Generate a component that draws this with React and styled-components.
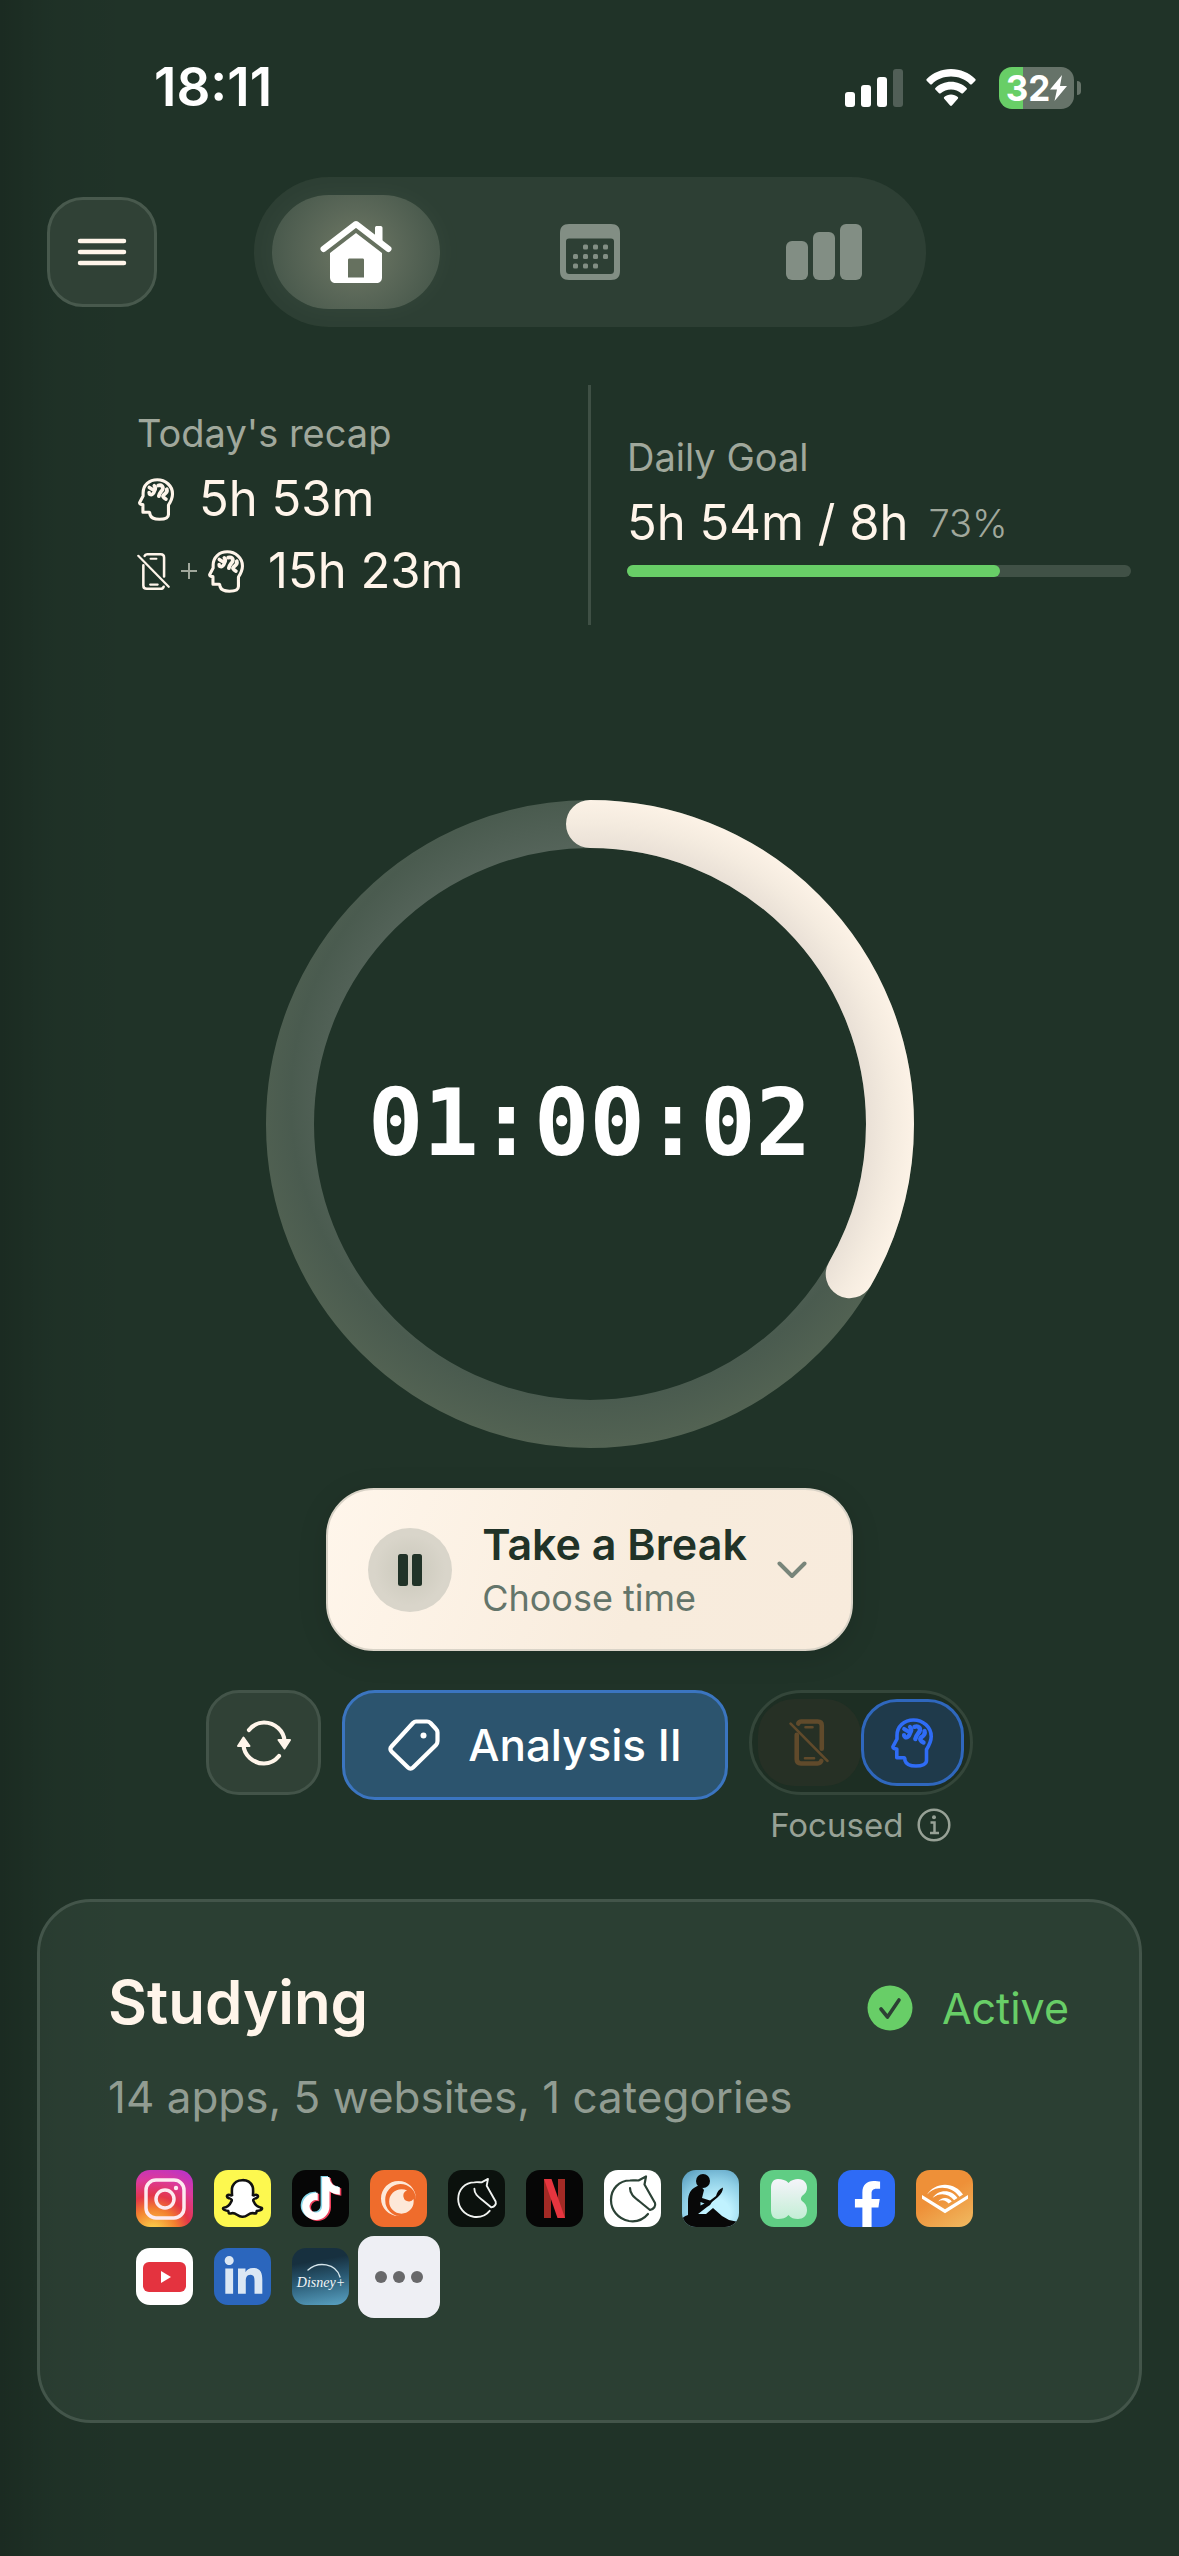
import React, { useState } from 'react'
import styled, { createGlobalStyle } from 'styled-components'
import { FaAudible, FaFacebookF, FaLinkedinIn, FaSnapchatGhost, FaTiktok } from 'react-icons/fa'
import { SiCrunchyroll } from 'react-icons/si'

const cream = '#fff5ea'
const muted = '#a0a89c'
const green = '#68ce67'

const GlobalStyle = createGlobalStyle`
* {
  box-sizing: border-box;
  margin: 0;
  padding: 0;
}
body {
  background-color: #203328;
  color: ${cream};
  font-family: Inter, "Liberation Sans", sans-serif;
}
button {
  font-family: inherit;
  color: inherit;
  background: none;
  border: none;
  cursor: pointer;
}
svg {
  display: block;
  flex-shrink: 0;
}
`

const Page = styled.div`
  min-height: 100vh;
  display: flex;
  flex-direction: column;
  background: linear-gradient(to right, rgba(0, 0, 0, 0.16), rgba(0, 0, 0, 0.05) 50px, transparent 130px);
`

/* ---------- status bar ---------- */

const StatusBar = styled.div`
  display: flex;
  justify-content: space-between;
  align-items: center;
  padding: 56px 98px 58px 154px;
  color: #fff;
`
const Clock = styled.time`
  font-size: 53px;
  line-height: 63px;
  font-weight: 600;
`
const StatusIcons = styled.div`
  display: flex;
  align-items: center;
  gap: 23px;
`
const Battery = styled.div`
  position: relative;
  display: flex;
  align-items: center;
  justify-content: center;
  width: 75px;
  height: 42px;
  margin-right: 7px;
  border-radius: 13px;
  background: linear-gradient(to right, ${green} 32%, #667369 32%);
  font-size: 35px;
  line-height: 42px;
  font-weight: 700;

  &::after {
    content: "";
    position: absolute;
    left: 78px;
    top: 14px;
    width: 4px;
    height: 14px;
    border-radius: 0 4px 4px 0;
    background: #667369;
  }
`

/* ---------- header ---------- */

const Header = styled.header`
  display: grid;
  grid-template-columns: 1fr auto 1fr;
  align-items: center;
  padding: 0 47px;
`
const MenuButton = styled.button`
  display: flex;
  align-items: center;
  justify-content: center;
  width: 110px;
  height: 110px;
  border: 3px solid #48594d;
  border-radius: 36px;
  background-color: #304136;
`
const Nav = styled.nav`
  display: flex;
  gap: 66px;
  padding: 18px;
  border-radius: 75px;
  background-color: #2d3f34;
`
const NavButton = styled.button`
  display: flex;
  align-items: center;
  justify-content: center;
  width: 168px;
  height: 114px;
  border-radius: 57px;
  color: ${({ $active }) => ($active ? '#fff' : '#828e84')};
  background: ${({ $active }) =>
    $active ? 'radial-gradient(circle, #66715f 20%, #5a6758 45%, #4a5a4d 80%)' : 'none'};
  box-shadow: ${({ $active }) => ($active ? '0 0 30px rgba(255, 245, 234, 0.04)' : 'none')};
`

/* ---------- recap ---------- */

const Recap = styled.section`
  display: grid;
  grid-template-columns: 1fr 3px 1fr;
  height: 240px;
  margin-top: 58px;
`
const RecapColumn = styled.div`
  display: flex;
  flex-direction: column;
  justify-content: center;
  gap: 12px;
  padding: ${({ $goal }) => ($goal ? '0 48px 0 36px' : '0 36px 0 137px')};
`
const Divider = styled.div`
  background-color: #3f5045;
`
const Label = styled.h2`
  font-size: 38px;
  line-height: 48px;
  font-weight: 400;
  color: ${muted};
`
const RecapRow = styled.div`
  display: flex;
  align-items: center;
  gap: ${({ $wide }) => ($wide ? '24px' : '12px')};
  font-size: 49px;
  line-height: 60px;
`
const Icons = styled.span`
  display: flex;
  align-items: center;
  gap: 11px;
`
const Percent = styled.span`
  margin-left: 8px;
  font-size: 38px;
  font-weight: 300;
  color: ${muted};
`
const Track = styled.div`
  height: 12px;
  border-radius: 6px;
  background-color: #405146;
`
const Fill = styled.div`
  height: 12px;
  border-radius: 6px;
  background-color: ${green};
`

/* ---------- timer ---------- */

const Timer = styled.section`
  display: grid;
  place-items: center;
  margin-top: 175px;

  > * {
    grid-area: 1 / 1;
  }
`
const TimeLeft = styled.div`
  font-family: "DejaVu Sans Mono", "Liberation Mono", monospace;
  font-size: 92px;
  line-height: 108px;
  font-weight: 700;
  color: #fff;
`
const BreakButton = styled.button`
  display: flex;
  align-items: center;
  align-self: center;
  gap: 30px;
  height: 163px;
  margin-top: 40px;
  padding: 0 44px 0 40px;
  border: 2px solid #d9d3c7;
  border-radius: 48px;
  background: linear-gradient(110deg, #fff6eb, #f8ecdd 60%, #f8ebdc);
  box-shadow: 0 6px 30px rgba(0, 0, 0, 0.12);
  color: #213328;
  text-align: left;
`
const PauseCircle = styled.span`
  display: flex;
  align-items: center;
  justify-content: center;
  width: 84px;
  height: 84px;
  border-radius: 50%;
  background: radial-gradient(circle, #cac8bb, #d9d5ca 60%);
`
const BreakText = styled.span`
  display: flex;
  flex-direction: column;
  gap: 4px;
  font-size: 43px;
  line-height: 52px;
  font-weight: 600;
`
const BreakHint = styled.span`
  font-size: 36px;
  line-height: 48px;
  font-weight: 400;
  color: #64756a;
`

/* ---------- session controls ---------- */

const Controls = styled.section`
  display: flex;
  justify-content: center;
  align-items: flex-start;
  gap: 21px;
  margin-top: 39px;
`
const RefreshButton = styled.button`
  display: flex;
  align-items: center;
  justify-content: center;
  width: 115px;
  height: 105px;
  border: 3px solid #435449;
  border-radius: 33px;
  background-color: #304136;
`
const SubjectButton = styled.button`
  display: flex;
  align-items: center;
  gap: 28px;
  height: 110px;
  padding: 0 43px;
  border: 3px solid #3b75c0;
  border-radius: 33px;
  background-color: #2c546e;
  color: #fff;
  font-size: 44px;
  font-weight: 500;
`
const ModeColumn = styled.div`
  display: flex;
  flex-direction: column;
  align-items: center;
  gap: 10px;
`
const ModeSwitch = styled.div`
  display: flex;
  width: 224px;
  height: 105px;
  padding: 6px;
  border: 3px solid #34463a;
  border-radius: 53px;
  background-color: #1d2e23;
`
const ModeOption = styled.label`
  position: relative;
  flex: 1;
  display: flex;
  align-items: center;
  justify-content: center;
  border-radius: 36px;
  border: 3px solid ${({ $active }) => ($active ? '#2f67bd' : 'transparent')};
  background-color: ${({ $active }) => ($active ? '#1f3a4b' : '#263025')};
  color: ${({ $active }) => ($active ? '#2f6cf6' : '#604a2b')};
  cursor: pointer;

  input {
    position: absolute;
    opacity: 0;
  }
`
const ModeName = styled.div`
  display: flex;
  align-items: center;
  gap: 14px;
  font-size: 33px;
  line-height: 40px;
  color: #97a196;
`

/* ---------- blocked apps card ---------- */

const Card = styled.section`
  margin: 54px 37px 0;
  padding: 64px 70px 115px 68px;
  border: 3px solid #43554a;
  border-radius: 54px;
  background-color: rgba(140, 168, 150, 0.11);
`
const CardHead = styled.div`
  display: flex;
  align-items: center;
  justify-content: space-between;
`
const Title = styled.h1`
  font-size: 60px;
  line-height: 72px;
  font-weight: 600;
`
const Active = styled.div`
  display: flex;
  align-items: center;
  gap: 29px;
  padding-top: 12px;
  font-size: 43px;
  line-height: 54px;
  color: ${green};
`
const Summary = styled.p`
  margin-top: 32px;
  font-size: 44px;
  line-height: 54px;
  color: #919c92;
`
const AppGrid = styled.ul`
  display: grid;
  grid-template-columns: repeat(11, 57px);
  grid-auto-rows: 57px;
  gap: 21px;
  margin: 46px 0 0 28px;
  list-style: none;
`
const AppTile = styled.li`
  width: 57px;
  height: 57px;
  border-radius: 14px;
  overflow: hidden;
  background: ${({ $bg }) => $bg};
`
const MoreItem = styled.li`
  place-self: center;
`
const MoreButton = styled.button`
  display: flex;
  align-items: center;
  justify-content: center;
  gap: 6px;
  width: 82px;
  height: 82px;
  border-radius: 16px;
  background-color: #eeeff4;

  span {
    width: 12px;
    height: 12px;
    border-radius: 50%;
    background-color: #68686a;
  }
`

/* ---------- icons ---------- */

const HeadIcon = ({ width = 36, height = 43 }) => (
  <svg width={width} height={height} viewBox="0 0 42 50" fill="none" stroke="currentColor" strokeLinecap="round" strokeLinejoin="round">
    <path strokeWidth="3.6" d="M22.5 2C13 2 6 8.5 6 17.5V21L2 28.5C1.6 30 3 31 5.8 31V39.8H13C14 39.8 14 41 14 42.5C15 46 19 48 25 48C31 48 35.5 46 35.5 42.5V31.5C38 27.5 40.2 24 40.2 18.5C40.2 9 32 2 22.5 2Z" />
    {/* brain, three folds */}
    <path strokeWidth="4.2" d="M13.2 11L16.5 13M19 9C20.500 10.500 20.500 13 19 15.500C18 18.500 16 20 14 19C13 18.500 13 17.500 13 17" />
    <path strokeWidth="4.4" d="M23.500 8.800C27.500 7.500 30 10 28.500 13.500C27 16 25 17 24.300 21" />
    <path strokeWidth="4.4" d="M33.500 13C34.500 16 32.500 18 30 19.500C28.500 21 29.500 23 32.500 24.500" />
  </svg>
)

const PhoneOffIcon = ({ width = 33, height = 39, weight = 3 }) => (
  <svg width={width} height={height} viewBox="0 0 39 46" fill="none" stroke="currentColor" strokeLinecap="round">
    <path strokeWidth={weight} d="M9 4.500C9.500 3 10.500 2.500 12 2.500H28C31 2.500 32 4 32 6.500V29" />
    <path strokeWidth={weight} d="M7.500 15.500V39.500C7.500 42 9 43.500 11.500 43.500H28C30 43.500 31 42.500 31.500 41" />
    <path strokeWidth="2.400" d="M16 8H23M15.500 38.500H24.500" />
    <path strokeWidth="2.600" d="M1.500 4.500L37.500 41" />
  </svg>
)

const HorseIcon = ({ color, viewBox = '0 0 57 57' }) => (
  <svg width="57" height="57" viewBox={viewBox} fill="none" stroke={color} strokeWidth="2.200" strokeLinecap="round" strokeLinejoin="round">
    <path d="M44 44C39 50 32 52 25 51C14 49 7 40 7 30C7 19 15 10.500 26 10.500C29 10 32 10.500 34.500 10.500L42 6.500L40.500 14.500L51 33C52 36 50 39 46 40L35 31C30 27 26 24 26 18" />
  </svg>
)

const apps = [
  {
    name: 'Instagram',
    bg: 'radial-gradient(circle at 30% 110%, #fbd14b 5%, #f3802f 32%, #e43649 50%, #dc3a9b 72%, #a92fe0 105%)',
    logo: (
      <svg width="57" height="57" viewBox="0 0 57 57" fill="none" stroke="#fdeaf0" strokeWidth="3.500">
        <rect x="10" y="10" width="38" height="38" rx="10" />
        <circle cx="29" cy="29" r="9" />
        <circle cx="40" cy="18" r="2.200" fill="#fdeaf0" stroke="none" />
      </svg>
    ),
  },
  {
    name: 'Snapchat',
    bg: '#fdf84f',
    logo: (
      <svg width="57" height="57" viewBox="0 0 57 57">
        <FaSnapchatGhost x="9" y="9" size={39} color="#fff" stroke="#111" strokeWidth="34" overflow="visible" />
      </svg>
    ),
  },
  {
    name: 'TikTok',
    bg: '#060606',
    logo: (
      <svg width="57" height="57" viewBox="0 0 57 57">
        <FaTiktok x="6" y="6" size={43} color="#86d7ea" />
        <FaTiktok x="9" y="8" size={43} color="#ee3f5b" />
        <FaTiktok x="7.500" y="7" size={43} color="#fff" />
      </svg>
    ),
  },
  {
    name: 'Crunchyroll',
    bg: '#ef6c2c',
    logo: (
      <svg width="57" height="57" viewBox="0 0 57 57">
        <SiCrunchyroll x="11" y="11" size={35} color="#fde8d8" />
      </svg>
    ),
  },
  { name: 'Lichess', bg: '#0b110d', logo: <HorseIcon color="#f1f3f1" viewBox="-5 -4 67 67" /> },
  {
    name: 'Netflix',
    bg: '#060606',
    logo: (
      <svg width="57" height="57" viewBox="0 0 57 57">
        <path fill="#a32a25" d="M18 9H25V48H18ZM32 9H39V48H32Z" />
        <path fill="#e6353f" d="M18 9H25.500L39 48H31.500Z" />
      </svg>
    ),
  },
  { name: 'Lichess Beta', bg: '#fff', logo: <HorseIcon color="#2b4236" /> },
  {
    name: 'Kindle',
    bg: 'radial-gradient(circle at 60% 75%, #c0f2ff 25%, #8fcfe6 60%, #4f94b8)',
    logo: (
      <svg width="57" height="57" viewBox="0 0 57 57" fill="#080808">
        <circle cx="21" cy="11" r="7" />
        <path d="M18 15C9 18 6 23 6 32V45C2 46 0 48 0 50V57H57V52C53 51 50 51 47 50L40 46L31 38L24 44H16L25 37L28 35L30 32L36 27C39 24 41 21 41 17.500C37 19 35 22 34 26L28 30.500L20 28L22 20Z" />
        <path fill="#a6e2f2" d="M18.500 32L22.500 33.500L18.500 35.500Z" />
      </svg>
    ),
  },
  {
    name: 'Kick',
    bg: '#60cd84',
    logo: (
      <svg width="57" height="57" viewBox="0 0 57 57">
        <defs>
          <linearGradient id="kick" x2="0" y2="1">
            <stop offset="0" stopColor="#f5f4fa" />
            <stop offset="1" stopColor="#c3eed5" />
          </linearGradient>
        </defs>
        <path
          fill="url(#kick)"
          d="M18 9C22 9 26 10 28.500 13C31 10 35 9 38 9C44 9 47 13 47 18C47 21 45 24 42 26C40.500 28 40.500 30 42 31C45 33 47 36 47 40C47 46 43 49 38 49C34 49 31 48 28.500 45C26 48 22 49 18 49C13 49 11 45 11 40V18C11 13 13 9 18 9Z"
        />
      </svg>
    ),
  },
  {
    name: 'Facebook',
    bg: '#2e6bf6',
    logo: (
      <svg width="57" height="57" viewBox="0 0 57 57">
        <FaFacebookF x="6" y="11" size={47} color="#fff" />
      </svg>
    ),
  },
  {
    name: 'Audible',
    bg: 'linear-gradient(150deg, #ee9038 45%, #f0bb62)',
    logo: (
      <svg width="57" height="57" viewBox="0 0 57 57">
        <FaAudible x="6" y="6" size={46} color="#fff" />
      </svg>
    ),
  },
  {
    name: 'YouTube',
    bg: '#fff',
    logo: (
      <svg width="57" height="57" viewBox="0 0 57 57">
        <rect x="7" y="14" width="43" height="30" rx="6" fill="#e4333f" />
        <path fill="#fff" d="M25 23L35 29L25 35Z" />
      </svg>
    ),
  },
  {
    name: 'LinkedIn',
    bg: '#2b66bd',
    logo: (
      <svg width="57" height="57" viewBox="0 0 57 57">
        <FaLinkedinIn x="8" y="8" size={43} color="#dbe7f4" />
      </svg>
    ),
  },
  {
    name: 'Disney+',
    bg: 'linear-gradient(170deg, #17303f 25%, #2a5a74 55%, #5aa3c4)',
    logo: (
      <svg width="57" height="57" viewBox="0 0 57 57">
        <path d="M16 22C26 13 44 15 48 29" fill="none" stroke="#d4e4ea" strokeWidth="1.400" strokeLinecap="round" />
        <text x="29" y="39" textAnchor="middle" fill="#f2f6f8" fontFamily="Liberation Serif, serif" fontStyle="italic" fontSize="14">
          Disney+
        </text>
      </svg>
    ),
  },
]

const HomeIcon = () => (
  <svg width="72" height="64" viewBox="0 0 72 64">
    <path d="M3.500 29L36 4L68.500 29" fill="none" stroke="currentColor" strokeWidth="6" strokeLinecap="round" strokeLinejoin="round" />
    <path fill="currentColor" d="M55 7.500C55 6.500 56 6 57 6H60C61.500 6 62.500 6.500 62.500 8V22L55 16Z" />
    <path fill="currentColor" fillRule="evenodd" d="M36 13L62 33V57C62 61 60 63 56 63H16C12 63 10 61 10 57V33ZM28 40V57.500H44V40C44 39 43.500 38.500 42.500 38.500H29.500C28.500 38.500 28 39 28 40Z" />
  </svg>
)

const dots = [
  [1, 0], [2, 0], [3, 0],
  [0, 1], [1, 1], [2, 1], [3, 1],
  [0, 2], [1, 2], [2, 2],
]

const CalendarIcon = () => (
  <svg width="60" height="56" viewBox="0 0 60 56" fill="currentColor">
    <path fillRule="evenodd" d="M9 0H51C57 0 60 3 60 9V47C60 53 57 56 51 56H9C3 56 0 53 0 47V9C0 3 3 0 9 0ZM9 14.500C7 14.500 6 15.500 6 17.500V46C6 49 7 50 10 50H50C53 50 54 49 54 46V17.500C54 15.500 53 14.500 51 14.500Z" />
    {dots.map(([x, y]) => (
      <rect key={`${x}-${y}`} x={13 + x * 10} y={20.5 + y * 9.5} width="5" height="5" rx="1.500" />
    ))}
  </svg>
)

const StatsIcon = () => (
  <svg width="76" height="56" viewBox="0 0 76 56" fill="currentColor">
    <rect x="0" y="17" width="22" height="39" rx="6" />
    <rect x="27" y="8" width="22" height="48" rx="6" />
    <rect x="54" y="0" width="22" height="56" rx="6" />
  </svg>
)

const tabs = [
  { id: 'home', label: 'Home', icon: <HomeIcon /> },
  { id: 'calendar', label: 'Calendar', icon: <CalendarIcon /> },
  { id: 'stats', label: 'Statistics', icon: <StatsIcon /> },
]

// radius of the ring's centre line
const R = 300
const LENGTH = 2 * Math.PI * R

const Ring = ({ value }) => (
  <svg width="648" height="648" viewBox="0 0 648 648" fill="none" strokeWidth="48">
    <defs>
      <radialGradient id="track" gradientUnits="userSpaceOnUse" cx="324" cy="300" r="348">
        <stop offset="0.720" stopColor="#55645a" />
        <stop offset="0.860" stopColor="#4a5b4f" />
        <stop offset="1" stopColor="#536353" />
      </radialGradient>
      <radialGradient id="progress" gradientUnits="userSpaceOnUse" cx="324" cy="324" r="324">
        <stop offset="0.850" stopColor="#e9e0d6" />
        <stop offset="0.930" stopColor="#f4ebdf" />
        <stop offset="1" stopColor="#fcf2e6" />
      </radialGradient>
    </defs>
    <circle cx="324" cy="324" r={R} stroke="url(#track)" />
    <circle
      cx="324"
      cy="324"
      r={R}
      stroke="url(#progress)"
      strokeLinecap="round"
      strokeDasharray={`${LENGTH * value} ${LENGTH}`}
      transform="rotate(-90 324 324)"
    />
  </svg>
)

const App = () => {
  const [tab, setTab] = useState('home')
  const [mode, setMode] = useState('focused')

  return (
    <>
    <GlobalStyle />
    <Page>

      <StatusBar>
        <Clock>18:11</Clock>
        <StatusIcons>
          <svg width="58" height="38" viewBox="0 0 58 38" fill="#fff">
            <rect x="0" y="23" width="10" height="15" rx="3" />
            <rect x="16" y="16" width="10" height="22" rx="3" />
            <rect x="32" y="8" width="10" height="30" rx="3" />
            <rect x="48" y="0" width="10" height="38" rx="3" opacity="0.220" />
          </svg>
          <svg width="50" height="38" viewBox="0 0 50 38" fill="#fff">
            <path d="M25 0C34.500 0 43 3.800 49.300 10C49.800 10.500 49.800 11.200 49.300 11.700L45.800 15.200C45.300 15.700 44.600 15.700 44.100 15.200C39 10.300 32.300 7.600 25 7.600C17.700 7.600 11 10.300 5.900 15.200C5.400 15.700 4.700 15.700 4.200 15.200L0.700 11.700C0.200 11.200 0.200 10.500 0.700 10C7 3.800 15.500 0 25 0Z" />
            <path d="M25 12.800C31 12.800 36.500 15.100 40.600 18.900C41.100 19.400 41.100 20.100 40.600 20.600L37 24.200C36.500 24.700 35.800 24.700 35.300 24.200C32.500 21.800 29 20.400 25 20.400C21 20.400 17.500 21.800 14.700 24.200C14.200 24.700 13.500 24.700 13 24.200L9.400 20.600C8.900 20.100 8.900 19.400 9.400 18.900C13.500 15.100 19 12.800 25 12.800Z" />
            <path d="M25 25.500C27.600 25.500 30 26.400 31.800 28C32.300 28.500 32.300 29.200 31.800 29.700L25.900 36.600C25.400 37.100 24.600 37.100 24.100 36.600L18.200 29.700C17.700 29.200 17.700 28.500 18.200 28C20 26.400 22.400 25.500 25 25.500Z" />
          </svg>
          <Battery>
            32
            <svg width="17" height="26" viewBox="0 0 17 26">
              <path fill="#fff" d="M12 0L0 14.500H7L4.500 26L17 11H10Z" />
            </svg>
          </Battery>
        </StatusIcons>
      </StatusBar>

      <Header>
        <MenuButton aria-label="Menu">
          <svg width="50" height="28" viewBox="0 0 50 28" stroke={cream} strokeWidth="4.500" strokeLinecap="round">
            <path d="M3 3H47M3 14H47M3 25H47" />
          </svg>
        </MenuButton>
        <Nav>
          {tabs.map((t) => (
            <NavButton key={t.id} $active={t.id === tab} aria-label={t.label} onClick={() => setTab(t.id)}>
              {t.icon}
            </NavButton>
          ))}
        </Nav>
      </Header>

      <Recap>
        <RecapColumn>
          <Label>Today's recap</Label>
          <RecapRow $wide>
            <Icons><HeadIcon width={38} /></Icons>
            5h 53m
          </RecapRow>
          <RecapRow $wide>
            <Icons>
              <PhoneOffIcon />
              <svg width="16" height="16" viewBox="0 0 16 16" stroke={muted} strokeWidth="2">
                <path d="M0 8H16M8 0V16" />
              </svg>
              <HeadIcon />
            </Icons>
            15h 23m
          </RecapRow>
        </RecapColumn>
        <Divider />
        <RecapColumn $goal>
          <Label>Daily Goal</Label>
          <RecapRow>
            5h 54m / 8h
            <Percent>73%</Percent>
          </RecapRow>
          <Track role="progressbar" aria-label="Daily Goal" aria-valuenow={73}>
            <Fill style={{ width: '74%' }} />
          </Track>
        </RecapColumn>
      </Recap>

      <Timer>
        <Ring value={1 / 3} />
        <TimeLeft>01:00:02</TimeLeft>
      </Timer>

      <BreakButton>
        <PauseCircle>
          <svg width="24" height="32" viewBox="0 0 24 32" fill="#213328">
            <rect x="0" y="0" width="10" height="32" rx="2.500" />
            <rect x="14" y="0" width="10" height="32" rx="2.500" />
          </svg>
        </PauseCircle>
        <BreakText>
          Take a Break
          <BreakHint>Choose time</BreakHint>
        </BreakText>
        <svg width="30" height="18" viewBox="0 0 30 18" fill="none" stroke="#78857a" strokeWidth="4" strokeLinecap="round" strokeLinejoin="round">
          <path d="M2.500 2.500L15 15L27.500 2.500" />
        </svg>
      </BreakButton>

      <Controls>
        <RefreshButton aria-label="Refresh">
          <svg width="54" height="46" viewBox="0 0 54 46" fill="none" stroke={cream} strokeWidth="4.200" strokeLinecap="round">
            <path d="M12 10C16 5 21 2.500 27 2.500C38 2.500 47 11 47.500 21" />
            <path d="M42 36C38 41 33 43.500 27 43.500C16 43.500 7 35 6.500 25" />
            <path fill={cream} strokeWidth="2" strokeLinejoin="round" d="M41.500 20H53L47.500 28.500ZM1 26H12.500L6.500 17.500Z" />
          </svg>
        </RefreshButton>
        <SubjectButton>
          <svg width="52" height="52" viewBox="0 0 52 52" fill="none" stroke="#fff" strokeWidth="4.200" strokeLinejoin="round">
            <path d="M28 2.500H39C40.500 2.500 41.500 3 42.500 4L48 10C49 11 49.500 12 49.500 13.500V22C49.500 23.500 49 25 48 26L25 48.500C23.500 50 21.500 50 20 48.500L3.500 32.500C2 31 2 29 3.500 27.500L25 4C26 3 27 2.500 28 2.500Z" />
            <circle cx="35.500" cy="16.500" r="3" fill="#fff" stroke="none" />
          </svg>
          Analysis II
        </SubjectButton>
        <ModeColumn>
          <ModeSwitch role="radiogroup" aria-label="Mode">
            <ModeOption $active={mode === 'phone'}>
              <input type="radio" name="mode" aria-label="Phone off" checked={mode === 'phone'} onChange={() => setMode('phone')} />
              <PhoneOffIcon width={40} height={47} weight={4.5} />
            </ModeOption>
            <ModeOption $active={mode === 'focused'}>
              <input type="radio" name="mode" aria-label="Focused" checked={mode === 'focused'} onChange={() => setMode('focused')} />
              <HeadIcon width={42} height={50} />
            </ModeOption>
          </ModeSwitch>
          <ModeName>
            Focused
            <svg width="34" height="34" viewBox="0 0 34 34" fill="none" stroke="#97a196" strokeWidth="2.500">
              <circle cx="17" cy="17" r="15.300" />
              <path d="M13.500 14.500H17.500V25M13 25H22" />
              <circle cx="17" cy="9.300" r="2" fill="#97a196" stroke="none" />
            </svg>
          </ModeName>
        </ModeColumn>
      </Controls>

      <Card>
        <CardHead>
          <Title>Studying</Title>
          <Active>
            <svg width="46" height="46" viewBox="0 0 46 46">
              <circle cx="23" cy="23" r="22.500" fill={green} />
              <path d="M14 24L20.500 32L32 15" fill="none" stroke="#2d3f34" strokeWidth="3.600" strokeLinecap="round" strokeLinejoin="round" />
            </svg>
            Active
          </Active>
        </CardHead>
        <Summary>14 apps, 5 websites, 1 categories</Summary>
        <AppGrid>
          {apps.map((app) => (
            <AppTile key={app.name} $bg={app.bg} aria-label={app.name}>
              {app.logo}
            </AppTile>
          ))}
          <MoreItem>
            <MoreButton aria-label="More">
              <span />
              <span />
              <span />
            </MoreButton>
          </MoreItem>
        </AppGrid>
      </Card>

    </Page>
    </>
  )
}

export default App
